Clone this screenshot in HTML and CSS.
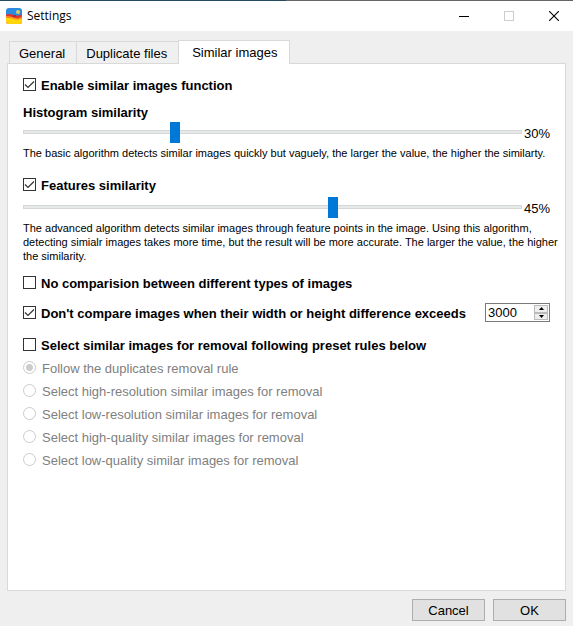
FILE: index.html
```
<!DOCTYPE html>
<html lang="en">

<head>
    <meta charset="UTF-8">
    <meta name="viewport" content="width=device-width, initial-scale=1.0">
    <title>Settings</title>
    <link rel="stylesheet" href="styles.css">
</head>

<body>
    <header class="titlebar">
        <svg class="app-icon" width="16" height="16" viewBox="0 0 16 16">
            <defs>
                <clipPath id="iconShape"><rect width="16" height="16" rx="3"/></clipPath>
            </defs>
            <g clip-path="url(#iconShape)">
                <rect width="16" height="16" fill="#2b8be0"/>
                <circle cx="12" cy="4" r="2" fill="#d9cf62"/>
                <path d="M0 6.5 Q4 5.5 8 7 T16 6.5 V16 H0Z" fill="#e5352b"/>
                <path d="M0 8 Q4 7.5 8 9.5 T16 8.5 V16 H0Z" fill="#fb8a1e"/>
                <path d="M0 10 Q4 9.5 8 11 T16 10.5 V16 H0Z" fill="#ffd60a"/>
                <path d="M6 8 L10 7 L9 9Z" fill="#7b2a4a"/>
            </g>
        </svg>
        <span class="title">Settings</span>
        <div class="window-buttons">
            <button type="button" aria-label="Minimize">
                <svg width="10" height="10" viewBox="0 0 10 10"><path d="M0 5.5H10" stroke="#000"/></svg>
            </button>
            <button type="button" aria-label="Maximize" disabled>
                <svg width="10" height="10" viewBox="0 0 10 10"><rect x="0.5" y="0.5" width="9" height="9" fill="none" stroke="#ccc"/></svg>
            </button>
            <button type="button" aria-label="Close">
                <svg width="10" height="10" viewBox="0 0 10 10"><path d="M0 0L10 10M10 0L0 10" stroke="#000" stroke-width="1.1"/></svg>
            </button>
        </div>
    </header>

    <form class="settings">
        <div class="tabs" role="tablist">
            <button type="button" class="tab" role="tab">General</button>
            <button type="button" class="tab" role="tab">Duplicate files</button>
            <button type="button" class="tab active" role="tab" aria-selected="true">Similar images</button>
        </div>

        <div class="panel" role="tabpanel">
            <div class="check-row">
                <input type="checkbox" id="enable" checked>
                <label for="enable">Enable similar images function</label>
            </div>

            <label class="heading" for="histogram">Histogram similarity</label>
            <div class="slider-row">
                <input type="range" id="histogram" min="0" max="100" value="30">
                <output for="histogram">30%</output>
            </div>
            <p class="hint">The basic algorithm detects similar images quickly but vaguely, the larger the value, the higher the similarty.</p>

            <div class="check-row features">
                <input type="checkbox" id="features" checked>
                <label for="features">Features similarity</label>
            </div>
            <div class="slider-row">
                <input type="range" id="featuresValue" aria-label="Features similarity value" min="0" max="72" value="45">
                <output for="featuresValue">45%</output>
            </div>
            <p class="hint">The advanced algorithm detects similar images through feature points in the image. Using this algorithm, detecting simialr images takes more time, but the result will be more accurate. The larger the value, the higher the similarity.</p>

            <div class="check-row option">
                <input type="checkbox" id="types">
                <label for="types">No comparision between different types of images</label>
            </div>
            <div class="check-row option">
                <input type="checkbox" id="difference" checked>
                <label for="difference">Don't compare images when their width or height difference exceeds</label>
                <div class="spinner">
                    <input type="text" id="pixels" inputmode="numeric" aria-label="Maximum difference" value="3000">
                    <div class="arrows">
                        <button type="button" aria-label="Increase">
                            <svg width="5" height="3" viewBox="0 0 5 3"><path d="M0 3L2.5 0L5 3Z" fill="#000"/></svg>
                        </button>
                        <button type="button" aria-label="Decrease">
                            <svg width="5" height="3" viewBox="0 0 5 3"><path d="M0 0L2.5 3L5 0Z" fill="#000"/></svg>
                        </button>
                    </div>
                </div>
            </div>
            <div class="check-row preset">
                <input type="checkbox" id="preset">
                <label for="preset">Select similar images for removal following preset rules below</label>
            </div>

            <div class="radio-row">
                <input type="radio" name="rule" id="follow" checked disabled>
                <label for="follow">Follow the duplicates removal rule</label>
            </div>
            <div class="radio-row">
                <input type="radio" name="rule" id="highRes" disabled>
                <label for="highRes">Select high-resolution similar images for removal</label>
            </div>
            <div class="radio-row">
                <input type="radio" name="rule" id="lowRes" disabled>
                <label for="lowRes">Select low-resolution similar images for removal</label>
            </div>
            <div class="radio-row">
                <input type="radio" name="rule" id="highQuality" disabled>
                <label for="highQuality">Select high-quality similar images for removal</label>
            </div>
            <div class="radio-row">
                <input type="radio" name="rule" id="lowQuality" disabled>
                <label for="lowQuality">Select low-quality similar images for removal</label>
            </div>
        </div>

        <div class="actions">
            <button type="button">Cancel</button>
            <button type="submit">OK</button>
        </div>
    </form>
</body>

</html>
```

FILE: styles.css
```
* {
    box-sizing: border-box;
}
body {
    margin: 0;
    min-height: 100vh;
    display: flex;
    flex-direction: column;
    background-color: #efefef;
    color: #000;
    font-family: "Liberation Sans", Arial, sans-serif;
    font-size: 13px;
    line-height: 17px;
}
button, input {
    margin: 0;
    font: inherit;
    color: inherit;
}

/* title bar */
.titlebar {
    display: flex;
    align-items: center;
    height: 31px;
    padding-left: 6px;
    background: linear-gradient(to right, #254a63 50%, #666 50%) top / 100% 1px no-repeat #fff;
}
.title {
    margin-left: 5px;
    font-family: "Open Sans", "Noto Sans", sans-serif;
    font-size: 12px;
    line-height: 16px;
}
.window-buttons {
    display: flex;
    margin-left: auto;
}
.window-buttons button {
    display: flex;
    align-items: center;
    justify-content: center;
    width: 45px;
    height: 30px;
    padding: 0 0 0 6px;
    border: none;
    background: none;
}

/* tabs */
.settings {
    flex: 1;
    display: flex;
    flex-direction: column;
    padding: 9px 7px 5px;
}
.tabs {
    display: flex;
    align-items: flex-end;
    padding-left: 2px;
}
.tab {
    height: 22px;
    padding: 1px 11px 0 9px;
    border: 1px solid #d9d9d9;
    border-right: none;
    border-bottom: none;
    background-color: #f0f0f0;
}
.tab.active {
    height: 24px;
    margin-bottom: -1px;
    padding: 0 12px 1px 13px;
    border-right: 1px solid #d9d9d9;
    background-color: #fff;
    z-index: 1;
}
.panel {
    flex: 1;
    padding: 10px 15px;
    border: 1px solid #d9d9d9;
    background-color: #fff;
}

/* check boxes */
.check-row {
    display: flex;
    align-items: center;
    height: 21px;
    font-weight: bold;
}
.check-row label {
    margin-left: 5px;
    padding-top: 2px;
    white-space: nowrap;
}
input[type="checkbox"] {
    appearance: none;
    flex: none;
    width: 13px;
    height: 13px;
    border: 1px solid #333;
    background-color: #fff;
}
input[type="checkbox"]:checked {
    background-image: url("data:image/svg+xml,%3Csvg xmlns='http://www.w3.org/2000/svg' viewBox='0 0 11 11'%3E%3Cpath d='M1 5.5L4 8.5L10 2.5' fill='none' stroke='%23333' stroke-width='1.2'/%3E%3C/svg%3E");
}
.features {
    margin-top: 14px;
}
.option {
    margin-top: 9px;
}
.preset {
    margin-top: 11px;
    margin-bottom: 1px;
}

/* sliders */
.heading {
    display: block;
    margin-top: 9px;
    font-weight: bold;
}
.slider-row {
    display: flex;
    align-items: center;
    height: 20px;
    margin-top: 2px;
}
.heading + .slider-row {
    margin-top: 1px;
}
.slider-row output {
    width: 28px;
    padding-top: 2px;
    padding-left: 2px;
}
input[type="range"] {
    appearance: none;
    flex: 1;
    min-width: 0;
    height: 20px;
    background: none;
}
input[type="range"]::-webkit-slider-runnable-track {
    height: 4px;
    border: 1px solid #d6d6d6;
    background-color: #e7eaea;
}
input[type="range"]::-webkit-slider-thumb {
    appearance: none;
    width: 10px;
    height: 21px;
    margin-top: -9px;
    background-color: #0078d7;
}
.hint {
    margin: 4px -12px 0 0;
    font-size: 11px;
    line-height: 14px;
}

/* number box */
.spinner {
    display: flex;
    width: 65px;
    height: 19px;
    margin-left: auto;
    border: 1px solid #7a7a7a;
    font-weight: normal;
}
.spinner input {
    flex: 1;
    min-width: 0;
    padding: 0 2px;
    border: none;
    background: none;
}
.arrows {
    display: flex;
    flex-direction: column;
    width: 15px;
    padding: 1px 1px 1px 0;
}
.arrows button {
    flex: 1;
    display: flex;
    align-items: center;
    justify-content: center;
    min-height: 0;
    padding: 0;
    border: 1px solid #bbb;
    background-color: #eee;
}

/* radio buttons */
.radio-row {
    display: flex;
    align-items: center;
    height: 23px;
    color: #808080;
}
.radio-row label {
    margin-left: 6px;
    padding-top: 2px;
}
input[type="radio"] {
    appearance: none;
    width: 13px;
    height: 13px;
    border: 1px solid #ccc;
    border-radius: 50%;
    background-color: #fff;
}
input[type="radio"]:checked {
    background-image: radial-gradient(circle, #ccc 3px, transparent 4px);
}

/* footer */
.actions {
    display: flex;
    justify-content: flex-end;
    gap: 8px;
    margin-top: 8px;
}
.actions button {
    width: 73px;
    height: 22px;
    padding: 1px 0 0;
    border: 1px solid #adadad;
    background-color: #e1e1e1;
}
```
